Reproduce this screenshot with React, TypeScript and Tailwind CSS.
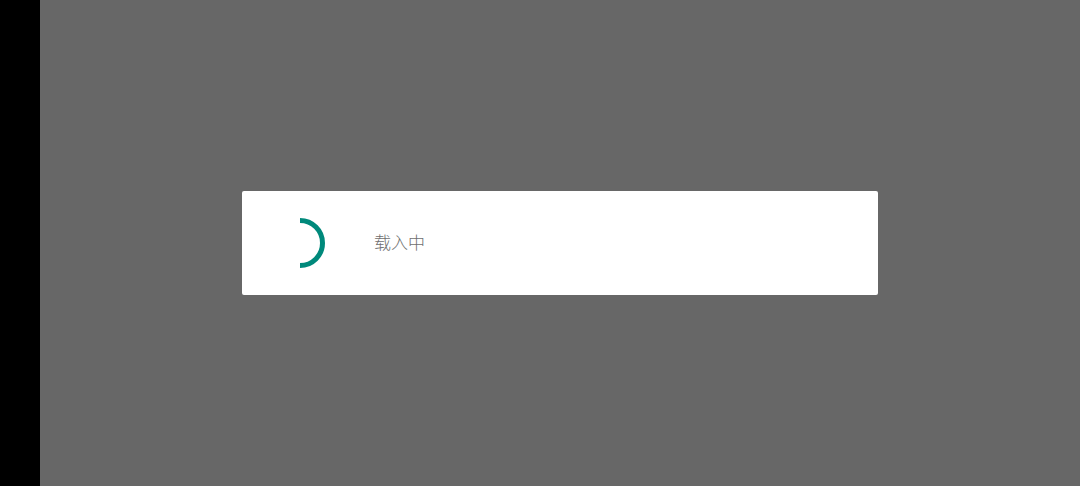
export default function App() {
  return (
    <div className="flex h-[486px] w-[1080px] overflow-hidden" style={{ fontFamily: '"Noto Sans CJK SC", "Noto Sans", sans-serif' }}>
      <div className="w-[40px] shrink-0 bg-black" />
      <div className="flex flex-1 items-center justify-center bg-[#676767]">
        <div className="flex h-[104px] w-[636px] items-center rounded-[2px] bg-white pl-[32px]">
          <svg width="52" height="52" viewBox="0 0 52 52" className="shrink-0">
            <path
              d="M26 3.5 A22.5 22.5 0 0 1 26 48.5"
              fill="none"
              stroke="#00897b"
              strokeWidth="5"
            />
          </svg>
          <span className="mb-[3px] ml-[48px] text-[17px] font-light leading-none text-[#6f6f6f]">载入中</span>
        </div>
      </div>
    </div>
  );
}
